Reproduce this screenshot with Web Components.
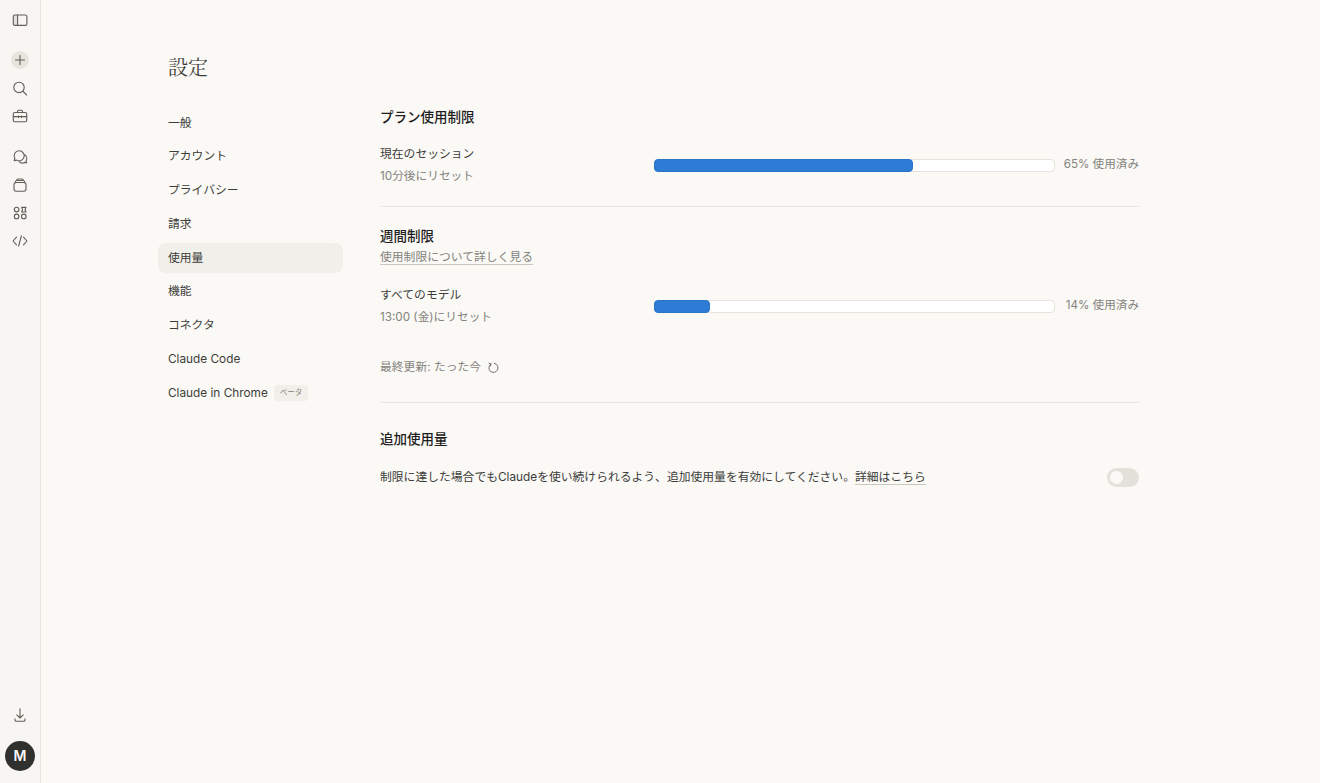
<!doctype html>
<html lang="ja">
<head>
<meta charset="utf-8">
<title>設定</title>
<style>
  html, body { margin: 0; height: 100%; }
  body {
    background: #faf9f6;
    color: #3d3d3a;
    font: 11.8px/20px Inter, "Noto Sans CJK JP", sans-serif;
    overflow: hidden;
  }
</style>
</head>
<body>
<app-shell>
  <side-rail slot="rail"></side-rail>
  <settings-nav slot="nav" active="使用量"></settings-nav>

  <usage-section title="プラン使用制限">
    <usage-row style="margin-top:17px" label="現在のセッション" sub="10分後にリセット" value="65"></usage-row>
  </usage-section>
  <hr-line style="margin-top:20px"></hr-line>

  <usage-section title="週間制限" style="margin-top:19px">
    <a-link slot="intro" style="color:#85837c">使用制限について詳しく見る</a-link>
    <usage-row style="margin-top:20px" label="すべてのモデル" sub="13:00 (金)にリセット" value="14"></usage-row>
    <last-updated></last-updated>
  </usage-section>
  <hr-line style="margin-top:25px"></hr-line>

  <usage-section title="追加使用量" style="margin-top:26px">
    <extra-row>制限に達した場合でもClaudeを使い続けられるよう、追加使用量を有効にしてください。<a-link>詳細はこちら</a-link></extra-row>
  </usage-section>
</app-shell>

<script>
const ICONS = {
  panel: `<rect x="2.3" y="4" width="13.6" height="10.4" rx="1.5"/><path d="M6.6 4v10.4"/><path d="M2.3 4h4.3v10.4H2.3z" fill="#55544f" fill-opacity=".12" stroke="none"/>`,
  plus: `<path d="M9 4.5v9M4.5 9h9"/>`,
  search: `<circle cx="8" cy="8.4" r="5.2"/><path d="M11.8 12.2l3.8 3.8"/>`,
  case: `<rect x="2.3" y="5.5" width="13.4" height="9.2" rx="1.5"/><path d="M6.5 5.5V4.2c0-.6.4-1 1-1h3c.6 0 1 .4 1 1v1.3M2.3 9.6h13.4M7.5 9v1.6M10.5 9v1.6"/>`,
  chats: `<path d="M8.3 2.8a5 5 0 1 1-2.6 9.3l-2.6.5.8-2.2a5 5 0 0 1 4.4-7.6z"/><path d="M13.6 6.6a4.6 4.6 0 0 1 1.5 6.2l.6 2-2.2-.4a4.6 4.6 0 0 1-5.3-.6"/>`,
  stack: `<rect x="3" y="6.5" width="12" height="8.8" rx="2.2"/><path d="M4.2 6.5c0-1.4.7-2 1.8-2h6c1.1 0 1.8.6 1.8 2M5.6 4.5c0-.9.5-1.5 1.4-1.5h4c.9 0 1.4.6 1.4 1.5"/>`,
  shapes: `<circle cx="5.6" cy="5.6" r="2.3"/><path d="M10.6 3.4h4.4l-1 2.3 1 2.3h-4.4l1-2.3z"/><circle cx="5.6" cy="12.4" r="2.3"/><circle cx="12.8" cy="12.4" r="2.3"/>`,
  code: `<path d="M5.5 5.2L2 9l3.5 3.8M12.5 5.2L16 9l-3.5 3.8M10.4 3.8L7.6 14.2"/>`,
  download: `<path d="M9 1.8v9M5.8 7.8L9 11l3.2-3.2M4 11.8v1.2c0 .8.5 1.3 1.3 1.3h7.4c.8 0 1.3-.5 1.3-1.3v-1.2"/>`
};

class AppShell extends HTMLElement {
  constructor() {
    super();
    this.attachShadow({ mode: "open" });
    this.shadowRoot.innerHTML = `
      <style>
        :host { display: flex; height: 783px; }
        .page { flex: 1; display: flex; padding-left: 117px; }
        .nav { width: 185px; flex: none; }
        .content { width: 759px; margin-left: 37px; padding-top: 107px; }
      </style>
      <slot name="rail"></slot>
      <div class="page">
        <div class="nav"><slot name="nav"></slot></div>
        <div class="content"><slot></slot></div>
      </div>`;
  }
}

class RailIcon extends HTMLElement {
  constructor() {
    super();
    this.attachShadow({ mode: "open" });
  }
  connectedCallback() {
    const round = this.hasAttribute("round");
    this.shadowRoot.innerHTML = `
      <style>
        :host { display: flex; width: 40px; height: 28px; align-items: center; justify-content: center; }
        span { display: flex; width: 18px; height: 18px; align-items: center; justify-content: center; border-radius: 50%; }
        .round { background: #e6e4dd; }
        svg { width: 18px; height: 18px; fill: none; stroke: #5f5e59; stroke-width: 1.1; stroke-linecap: round; stroke-linejoin: round; }
      </style>
      <span class="${round ? "round" : ""}"><svg viewBox="0 0 18 18">${ICONS[this.getAttribute("name")]}</svg></span>`;
  }
}

class SideRail extends HTMLElement {
  constructor() {
    super();
    this.attachShadow({ mode: "open" });
    this.shadowRoot.innerHTML = `
      <style>
        :host {
          display: flex; flex-direction: column; flex: none;
          width: 41px; height: 783px; padding: 6px 0 12px; box-sizing: border-box;
          background: #f7f6f2; border-right: 1px solid #e6e4dd;
        }
        .new { margin-top: 12px; }
        .tools { margin-top: 13px; }
        .bottom { margin-top: auto; }
        .avatar {
          width: 30px; height: 30px; margin: 11px 0 0 5px; border-radius: 50%;
          background: #30302e; color: #faf9f6;
          font: 600 14px/30px Inter, sans-serif; text-align: center;
        }
      </style>
      <rail-icon name="panel"></rail-icon>
      <div class="new">
        <rail-icon name="plus" round></rail-icon>
        <rail-icon name="search"></rail-icon>
        <rail-icon name="case"></rail-icon>
      </div>
      <div class="tools">
        <rail-icon name="chats"></rail-icon>
        <rail-icon name="stack"></rail-icon>
        <rail-icon name="shapes"></rail-icon>
        <rail-icon name="code"></rail-icon>
      </div>
      <div class="bottom">
        <rail-icon name="download"></rail-icon>
        <div class="avatar">M</div>
      </div>`;
  }
}

class SettingsNav extends HTMLElement {
  constructor() {
    super();
    this.attachShadow({ mode: "open" });
  }
  connectedCallback() {
    const active = this.getAttribute("active");
    const items = ["一般", "アカウント", "プライバシー", "請求", "使用量", "機能", "コネクタ", "Claude Code"];
    const row = (t, extra = "") =>
      `<li class="${t === active ? "on" : ""}">${t}${extra}</li>`;
    this.shadowRoot.innerHTML = `
      <style>
        :host { display: block; padding-top: 52px; }
        h1 {
          margin: 0 0 26px 10px; font: 400 20px/30px "Noto Serif CJK JP", "Liberation Serif", "Noto Sans CJK JP", serif;
          color: #3d3d3a;
        }
        ul { list-style: none; margin: 0; padding: 0; display: flex; flex-direction: column; gap: 3.75px; }
        li {
          display: flex; align-items: center; height: 30px; padding: 0 0 1px 10px; box-sizing: border-box;
          border-radius: 8px; color: #3d3d3a;
        }
        li.on { background: #f0efe9; }
        .badge {
          margin-left: 6px; padding: 0 6px; height: 16px; border-radius: 4px;
          background: #f0efe9; color: #85837c; font-size: 7.5px; line-height: 16px;
        }
      </style>
      <h1>設定</h1>
      <ul>
        ${items.map((t) => row(t)).join("")}
        ${row("Claude in Chrome", `<span class="badge">ベータ</span>`)}
      </ul>`;
  }
}

class UsageSection extends HTMLElement {
  constructor() {
    super();
    this.attachShadow({ mode: "open" });
  }
  connectedCallback() {
    this.shadowRoot.innerHTML = `
      <style>
        :host { display: block; }
        h2 { margin: 0; font: 500 13.5px/20px Inter, "Noto Sans CJK JP", sans-serif; color: #1f1e1d; }
        .intro { display: flex; }
        ::slotted(a-link) { margin-top: 4px; }
      </style>
      <h2>${this.getAttribute("title")}</h2>
      <slot name="intro" class="intro"></slot>
      <slot></slot>`;
    this.removeAttribute("title");
  }
}

class UsageRow extends HTMLElement {
  constructor() {
    super();
    this.attachShadow({ mode: "open" });
  }
  connectedCallback() {
    const value = this.getAttribute("value");
    this.shadowRoot.innerHTML = `
      <style>
        :host { display: flex; align-items: center; margin-top: 18px; }
        .text { width: 274px; flex: none; }
        .label { color: #3d3d3a; }
        .sub { margin-top: 2px; color: #85837c; font-size: 11.7px; }
        .bar {
          flex: none; width: 401px; height: 13px; box-sizing: border-box;
          background: #fff; border: 1px solid #e6e4dd; border-radius: 4px;
        }
        .fill {
          height: 13px; margin: -1px 0 0 -1px; width: ${value}%; box-sizing: border-box;
          background: #2c7cd6; border: 1px solid #2b74c7; border-radius: 4px;
        }
        .pct { flex: 1; text-align: right; color: #85837c; font-size: 11.6px; margin-top: -1.5px; white-space: nowrap; }
      </style>
      <div class="text">
        <div class="label">${this.getAttribute("label")}</div>
        <div class="sub">${this.getAttribute("sub")}</div>
      </div>
      <div class="bar"><div class="fill"></div></div>
      <div class="pct">${value}% 使用済み</div>`;
  }
}

class LastUpdated extends HTMLElement {
  constructor() {
    super();
    this.attachShadow({ mode: "open" });
    this.shadowRoot.innerHTML = `
      <style>
        :host { display: flex; align-items: center; margin-top: 30px; color: #85837c; }
        svg { width: 13px; height: 13px; margin-left: 6px; fill: none; stroke: #6f6e68; stroke-width: 1; stroke-linecap: round; stroke-linejoin: round; }
      </style>
      最終更新: たった今
      <svg viewBox="0 0 13 13"><path d="M4 2.9a4.6 4.6 0 1 0 3.4-.6"/><path d="M2 2.2l2 .7-.4 2"/></svg>`;
  }
}

class ExtraRow extends HTMLElement {
  constructor() {
    super();
    this.attachShadow({ mode: "open" });
    this.shadowRoot.innerHTML = `
      <style>
        :host { display: flex; align-items: center; justify-content: space-between; margin-top: 18px; color: #3d3d3a; }
      </style>
      <div><slot></slot></div>
      <toggle-switch></toggle-switch>`;
  }
}

class ToggleSwitch extends HTMLElement {
  constructor() {
    super();
    this.attachShadow({ mode: "open" });
    this.shadowRoot.innerHTML = `
      <style>
        :host { display: flex; align-items: center; width: 32px; height: 19px; padding: 0 3px; box-sizing: border-box; border-radius: 10px; background: #e3e1da; }
        span { width: 13px; height: 13px; border-radius: 50%; background: #faf9f6; }
      </style>
      <span></span>`;
  }
}

class ALink extends HTMLElement {
  constructor() {
    super();
    this.attachShadow({ mode: "open" });
    this.shadowRoot.innerHTML = `
      <style>
        :host { display: inline-block; line-height: 14px; border-bottom: 1px solid #c9c7bf; height: 15px; box-sizing: border-box; }
      </style>
      <slot></slot>`;
  }
}

class HrLine extends HTMLElement {
  constructor() {
    super();
    this.attachShadow({ mode: "open" });
    this.shadowRoot.innerHTML = `<style>:host { display: block; height: 1px; background: #e9e7e1; }</style>`;
  }
}

customElements.define("rail-icon", RailIcon);
customElements.define("side-rail", SideRail);
customElements.define("app-shell", AppShell);
customElements.define("settings-nav", SettingsNav);
customElements.define("usage-section", UsageSection);
customElements.define("usage-row", UsageRow);
customElements.define("last-updated", LastUpdated);
customElements.define("toggle-switch", ToggleSwitch);
customElements.define("extra-row", ExtraRow);
customElements.define("a-link", ALink);
customElements.define("hr-line", HrLine);
</script>
</body>
</html>
